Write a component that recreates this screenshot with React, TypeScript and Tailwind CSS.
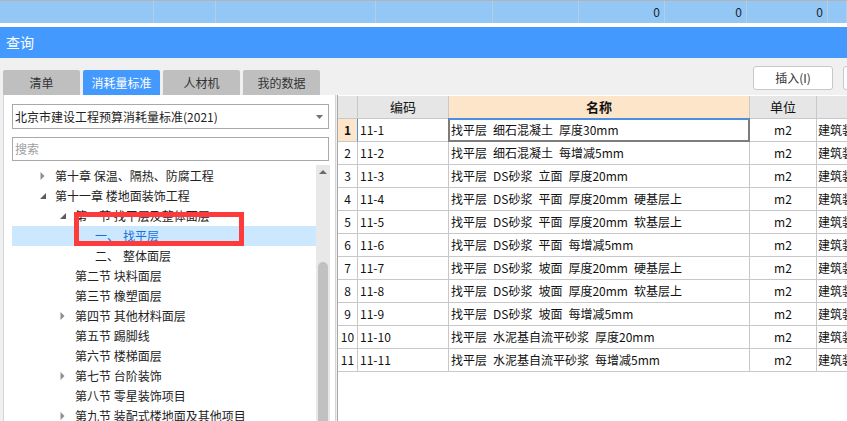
import React from 'react';

const font = "font-['Noto_Sans_CJK_SC',sans-serif]";

// top summary strip: column widths and values
const topCols = [
  { w: 'w-[154px]', v: '' },
  { w: 'w-[62px]', v: '' },
  { w: 'w-[160px]', v: '' },
  { w: 'w-[117px]', v: '' },
  { w: 'w-[86px]', v: '' },
  { w: 'w-[86px]', v: '0' },
  { w: 'w-[82px]', v: '0' },
  { w: 'w-[81px]', v: '0' },
  { w: 'w-[19px]', v: '' },
];

const tabs = ['清单', '消耗量标准', '人材机', '我的数据'];

type TreeNode = {
  label: string;
  level: 0 | 1 | 2;
  arrow?: 'open' | 'closed';
  active?: boolean;
};

const tree: TreeNode[] = [
  { label: '第十章 保温、隔热、防腐工程', level: 0, arrow: 'closed' },
  { label: '第十一章 楼地面装饰工程', level: 0, arrow: 'open' },
  { label: '第一节 找平层及整体面层', level: 1, arrow: 'open' },
  { label: '找平层', level: 2, active: true },
  { label: '整体面层', level: 2 },
  { label: '第二节 块料面层', level: 1 },
  { label: '第三节 橡塑面层', level: 1 },
  { label: '第四节 其他材料面层', level: 1, arrow: 'closed' },
  { label: '第五节 踢脚线', level: 1 },
  { label: '第六节 楼梯面层', level: 1 },
  { label: '第七节 台阶装饰', level: 1, arrow: 'closed' },
  { label: '第八节 零星装饰项目', level: 1 },
  { label: '第九节 装配式楼地面及其他项目', level: 1, arrow: 'closed' },
];

const rows = [
  ['11-1', '找平层 细石混凝土 厚度30mm'],
  ['11-2', '找平层 细石混凝土 每增减5mm'],
  ['11-3', '找平层 DS砂浆 立面 厚度20mm'],
  ['11-4', '找平层 DS砂浆 平面 厚度20mm 硬基层上'],
  ['11-5', '找平层 DS砂浆 平面 厚度20mm 软基层上'],
  ['11-6', '找平层 DS砂浆 平面 每增减5mm'],
  ['11-7', '找平层 DS砂浆 坡面 厚度20mm 硬基层上'],
  ['11-8', '找平层 DS砂浆 坡面 厚度20mm 软基层上'],
  ['11-9', '找平层 DS砂浆 坡面 每增减5mm'],
  ['11-10', '找平层 水泥基自流平砂浆 厚度20mm'],
  ['11-11', '找平层 水泥基自流平砂浆 每增减5mm'],
];

function Arrow({ open }: { open: boolean }) {
  if (open) {
    return (
      <svg width="6" height="6" viewBox="0 0 6 6">
        <path d="M6 0 L6 6 L0 6Z" fill="#5c5c5c" />
      </svg>
    );
  }
  return (
    <svg width="5" height="8" viewBox="0 0 5 8">
      <path d="M0.5 0 L4.5 4 L0.5 8Z" fill="#8e8e8e" />
    </svg>
  );
}

function TreeRow({ node }: { node: TreeNode }) {
  const lead =
    node.level === 0
      ? 'w-[43px] pl-[28px]'
      : node.level === 1
        ? 'w-[63px] pl-[48px]'
        : 'w-[83px]';
  const idx = node.label === '找平层' ? '一、' : '二、';
  return (
    <div
      className={`flex h-[20px] items-center text-[12px] ${
        node.active ? 'bg-[#cce8ff] text-[#1c6fd6]' : 'text-[#222]'
      }`}
    >
      <span className={`flex shrink-0 items-center ${lead}`}>
        {node.arrow && <Arrow open={node.arrow === 'open'} />}
      </span>
      {node.level === 2 ? (
        <span className="whitespace-nowrap">
          {idx}
          <span className="ml-[4px]">{node.label}</span>
        </span>
      ) : (
        <span className="whitespace-nowrap">{node.label}</span>
      )}
    </div>
  );
}

export default function App() {
  return (
    <div className={`relative h-[421px] w-[847px] overflow-hidden bg-[#f0f0f0] ${font}`}>
      {/* summary strip */}
      <div className="flex h-[23px] border-t border-[#b4b4b4] bg-[#93c8f6]">
        {topCols.map((c, i) => (
          <div
            key={i}
            className={`${c.w} shrink-0 border-r border-[#b9cde0] pr-[4px] text-right text-[12px] leading-[22px] text-[#222]`}
          >
            {c.v}
          </div>
        ))}
      </div>
      <div className="h-[4px] bg-white" />

      {/* title bar */}
      <div className="flex h-[31px] items-center bg-[#4499ff] px-[6px] text-[14px] text-white">
        查询
      </div>

      {/* tabs + actions */}
      <div className="flex h-[37px] pl-[3px]">
        <div className="flex shrink-0 items-end gap-[3px]">
          {tabs.map((t) => (
            <div
              key={t}
              className={`flex h-[25px] w-[77px] items-center justify-center rounded-t-[2px] text-[12px] ${
                t === '消耗量标准' ? 'bg-[#4499ff] text-white' : 'bg-[#bfbfbf] text-[#333]'
              }`}
            >
              {t}
            </div>
          ))}
        </div>
        <div className="ml-[433px] flex shrink-0 gap-[10px] pt-[8px]">
          <button className="h-[24px] w-[80px] shrink-0 rounded-[3px] border border-[#c8c8c8] bg-white text-[12px] text-[#333]">
            插入(I)
          </button>
          <button className="h-[24px] w-[80px] shrink-0 rounded-[3px] border border-[#c8c8c8] bg-white text-[12px] text-[#333]">
            替换(R)
          </button>
        </div>
      </div>

      {/* main */}
      <div className="flex h-[326px]">
        {/* left: standard tree */}
        <div className="ml-[3px] flex w-[333px] shrink-0 flex-col border-l border-r border-[#d4d4d4] bg-white pl-[8px] pt-[9px]">
          <div className="flex h-[25px] w-[317px] items-center justify-between border border-[#a9a9a9] pl-[2px] pr-[5px] text-[12px] text-[#222]">
            <span>北京市建设工程预算消耗量标准(2021)</span>
            <svg width="7" height="4" viewBox="0 0 7 4">
              <path d="M0 0 L7 0 L3.5 4Z" fill="#707070" />
            </svg>
          </div>
          <div className="mt-[8px] flex h-[24px] w-[317px] items-center border border-[#a9a9a9] pl-[2px] text-[12px] text-[#a0a0a0]">
            搜索
          </div>
          <div className="mt-[4px] flex min-h-0 flex-1">
            <div className="w-[304px] shrink-0 overflow-hidden pt-[1px]">
              {tree.map((n, i) => (
                <TreeRow key={i} node={n} />
              ))}
            </div>
            <div className="flex w-[14px] shrink-0 flex-col bg-[#e8e8e8]">
              <div className="flex h-[14px] items-center justify-center">
                <svg width="8" height="4" viewBox="0 0 8 4">
                  <path d="M0 4 L4 0 L8 4Z" fill="#6a6a6a" />
                </svg>
              </div>
              <div className="h-[83px]" />
              <div className="mx-[2px] flex-1 rounded-t-full bg-[#c1c1c1]" />
            </div>
          </div>
        </div>

        {/* right: items table */}
        <div className="ml-[1px] flex-1 overflow-hidden border-l border-[#a6a6a6] bg-white pt-[1px] text-[12px] text-[#111]">
          <div className="grid h-[23px] w-[620px] grid-cols-[20px_91px_301px_67px_141px] text-[13px]">
            <div className="border-b border-r border-[#c8c8c8] bg-[#e6e6e6]" />
            <div className="flex items-center justify-center border-b border-r border-[#c8c8c8] bg-[#e6e6e6]">
              编码
            </div>
            <div className="flex items-center justify-center border-b border-r border-[#c8c8c8] bg-[#fde5c9] font-bold">
              名称
            </div>
            <div className="flex items-center justify-center border-b border-r border-[#c8c8c8] bg-[#e6e6e6]">
              单位
            </div>
            <div className="flex items-center justify-center border-b border-[#c8c8c8] bg-[#e6e6e6]">
              专业
            </div>
          </div>
          {rows.map(([code, name], i) => {
            const first = i === 0;
            return (
              <div
                key={code}
                className="grid h-[23px] w-[620px] grid-cols-[20px_91px_301px_67px_141px]"
              >
                <div
                  className={`flex items-center justify-center border-b border-r ${
                    first
                      ? 'border-b-[#c8c8c8] border-r-[#4a8fe0] bg-[#fde5c9] font-bold'
                      : 'border-[#c8c8c8]'
                  }`}
                >
                  {i + 1}
                </div>
                <div className="flex items-center border-b border-r border-[#c8c8c8] pl-[2px]">
                  {code}
                </div>
                <div className="relative flex items-center whitespace-pre border-b border-r border-[#c8c8c8] pl-[2px]">
                  {name.split(' ').join('\u2002')}
                  {first && (
                    <div className="absolute -left-[1px] -top-[1px] bottom-[-1px] right-[-1px] border-2 border-[#7c7c7c] border-t-[#4a8fe0]" />
                  )}
                </div>
                <div className="flex items-center justify-center border-b border-r border-[#c8c8c8]">
                  m2
                </div>
                <div className="flex items-center whitespace-nowrap border-b border-[#c8c8c8] pl-[1px]">
                  建筑装饰工程
                </div>
              </div>
            );
          })}
        </div>
      </div>

      {/* red annotation box */}
      <div className="absolute left-[74px] top-[212px] h-[34px] w-[170px] border-[5px] border-[#ff3a3a]" />
    </div>
  );
}
